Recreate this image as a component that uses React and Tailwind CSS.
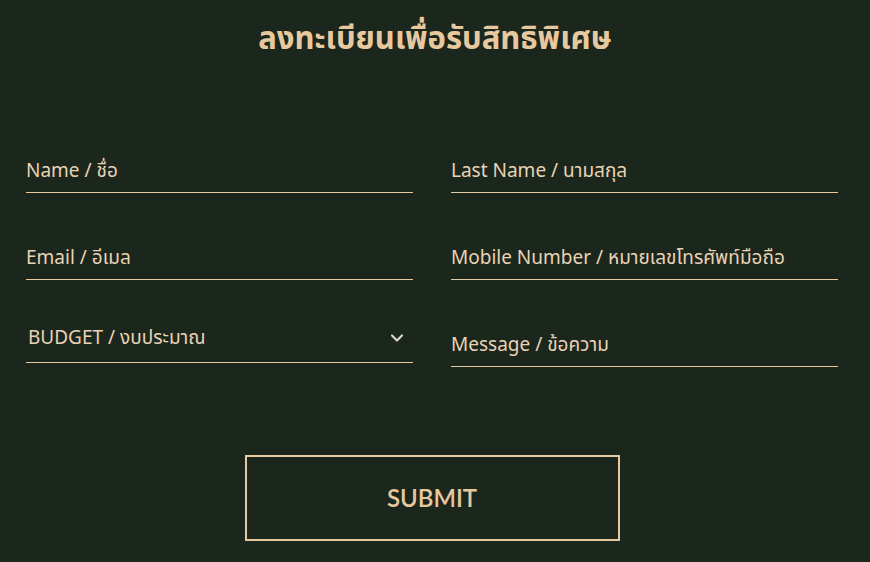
import { ChevronDown } from 'lucide-react'

const fieldFont = { fontFamily: '"Noto Sans", "Noto Sans Thai", sans-serif' }

function Field({ label, className = '' }) {
  return (
    <div className={`flex items-center h-[45px] border-b border-[#e7c9a0] ${className}`}>
      <span className="text-[19px] text-[#e9d3b4]" style={fieldFont}>{label}</span>
    </div>
  )
}

export default function App() {
  return (
    <div className="w-[870px] h-[562px] bg-[#1b271d] overflow-hidden">
      <h1 className="pt-[14px] text-center text-[31px] leading-[46px] font-bold text-[#e7c9a0] pr-[0px]" style={{ fontFamily: '"Noto Sans", "Noto Sans Thai", sans-serif' }}>
        ลงทะเบียนเพื่อรับสิทธิพิเศษ
      </h1>

      <form className="mt-[88px] pl-[26px] pr-[32px] grid grid-cols-2 gap-x-[38px] gap-y-[42px] items-start">
        <Field label="Name / ชื่อ" />
        <Field label="Last Name / นามสกุล" />
        <Field label="Email / อีเมล" />
        <Field label="Mobile Number / หมายเลขโทรศัพท์มือถือ" />
        <div className="mt-[-4px] flex items-center justify-between h-[45px] pb-[5px] pl-[2px] pr-[6px] border-b border-[#e7c9a0]">
          <span className="text-[19px] text-[#e9d3b4]" style={fieldFont}>BUDGET / งบประมาณ</span>
          <ChevronDown className="w-[20px] h-[20px] text-[#d9d4cc]" strokeWidth={2.6} />
        </div>
        <Field label="Message / ข้อความ" />
      </form>

      <div className="mt-[88px] flex justify-center pr-[6px]">
        <button
          type="button"
          className="w-[375px] h-[86px] border-2 border-[#e7c9a0] text-[24px] font-semibold text-[#e7c9a0]"
          style={{ fontFamily: 'Lato, "Noto Sans", sans-serif' }}
        >
          SUBMIT
        </button>
      </div>
    </div>
  )
}
